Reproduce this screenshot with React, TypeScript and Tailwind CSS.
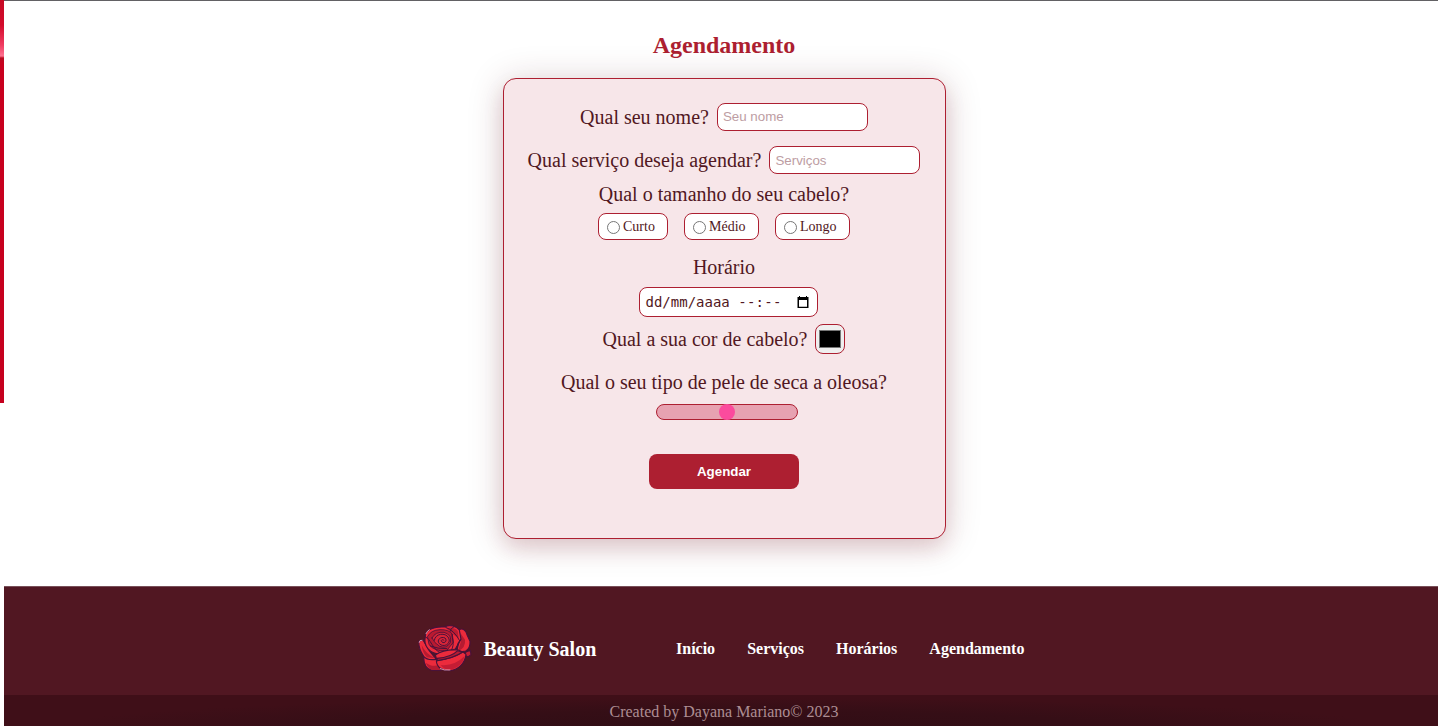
import React from "react";

function Rose() {
  return (
    <svg viewBox="0 0 210 195" className="h-[65px] w-[70px] shrink-0" fill="#ec2b3c" stroke="#48123a" strokeWidth="3.4" strokeLinejoin="round" strokeLinecap="round">
      <path d="M168 111 L181 106 L183 119 L174 126 L164 120Z" fill="#c91e35" />
      <path d="M41 124 C41 145 48 163 66 166 L94 166 L82 132Z" />
      <path d="M48 143 Q62 156 86 151 L92 165 L67 165 Q52 160 48 143Z" fill="#b61b31" stroke="none" />
      <path d="M79 137 L157 110 L168 118 C166 143 145 165 121 167 C96 169 80 156 79 137Z" />
      <path d="M92 150 Q133 154 164 123 Q158 153 125 164 Q103 166 92 150Z" fill="#c51d34" stroke="none" />
      <path d="M26 79 L39 75 L57 106 L79 133 Q51 137 41 124 C29 107 26 94 26 79Z" />
      <path d="M35 91 Q47 117 76 130 L51 127 Q38 116 35 91Z" fill="#b61b31" stroke="none" />
      <path d="M148 44 C157 38 168 46 171 59 L180 79 C181 94 177 103 167 108 L139 113 L148 76Z" />
      <path d="M151 54 L165 74 Q168 98 144 109 L153 79Z" fill="#b61b31" stroke="none" />
      <path d="M46 65 C44 50 64 33 104 36 C119 27 140 34 148 45 L153 73 L136 102 L88 116 C61 116 39 94 46 65Z" />
      <path d="M108 39 Q131 33 143 48 L146 70 L132 60Z" fill="#bd1b31" stroke="none" />
      <path d="M53 64 Q63 45 90 44 Q117 43 127 58 L130 82 L109 108 Q73 109 58 90Z" fill="#b91a31" strokeWidth="2.5" />
      <path d="M66 69 Q76 49 102 52 Q127 59 121 83 Q109 102 89 94 Q73 85 66 69Z" fill="#d72538" strokeWidth="2.5" />
      <path fill="none" strokeWidth="3" d="M73 76 C75 55 107 51 116 69 C125 87 100 99 88 86 C78 75 93 63 105 69 C113 77 104 87 96 81 C90 76 98 71 102 76 M126 58 C125 72 136 83 124 106 M48 67 C59 67 70 107 91 113 M107 37 Q132 45 149 77 M132 35 Q120 40 121 48 M152 74 Q139 83 142 105 M61 93 Q84 102 110 101" />
      <path d="M76 120 Q101 102 145 105 L158 111 Q130 130 81 137Z" />
      <path d="M81 130 Q124 127 143 107 L157 112 Q130 130 82 137Z" fill="#b61b31" />
      <path fill="none" stroke="#e5b6c9" strokeWidth="2.4" d="M48 56 Q52 47 58 44 M28 82 L30 77 L36 76 M91 161 Q101 167 120 165" />
    </svg>
  );
}

function TextField({ placeholder, className }: { placeholder: string; className?: string }) {
  return <input placeholder={placeholder} className={`w-[151px] rounded-lg border border-[#ad1f31] bg-white px-[5px] font-['Liberation_Sans',sans-serif] text-[13.333px] text-[#511722] outline-none placeholder:text-[#bd9da3] ${className ?? ""}`} />;
}

function Choice({ label, width }: { label: string; width: string }) {
  return (
    <label className={`flex h-[27px] items-center rounded-lg border border-[#ad1f31] bg-white pl-2 text-[14px] ${width}`}>
      <input type="radio" name="size" className="relative top-px mr-[3px] size-[13px] shrink-0 appearance-none rounded-full border border-[#767676] bg-white checked:border-4" />
      <span className="pt-px">{label}</span>
    </label>
  );
}

export default function App() {
  return (
    <div className="flex h-[726px] w-full overflow-hidden bg-white font-['Liberation_Serif',serif] text-[#511722]">
      <div className="h-[403px] w-1 shrink-0 bg-[linear-gradient(to_bottom,#c60a24_0px,#d30b2b_25px,#ef3c61_45px,#ff7290_56px,#b90a20_58px,#c8001e_64px,#c5001e_403px)]" />
      <div className="flex w-[1440px] shrink-0 flex-col items-center border-t border-[#626164]">
        <h1 className="mt-[31px] h-[27px] text-[24px] leading-[27px] font-bold text-[#ad1f31]">Agendamento</h1>
        <form className="mt-[19px] flex h-[461px] w-[443px] shrink-0 flex-col items-center rounded-[13px] border border-[#ad1f31] bg-[#f7e6e9] pt-6 text-[20px] leading-6 shadow-[0_10px_20px_rgba(150,20,40,0.13),0_3px_36px_rgba(81,23,34,0.2)]" onSubmit={(event) => event.preventDefault()}>
          <label className="flex h-7 items-center gap-2 whitespace-nowrap">Qual seu nome? <TextField placeholder="Seu nome" className="h-7 pb-[2px]" /></label>
          <label className="mt-[15px] flex h-7 items-center gap-2 whitespace-nowrap">Qual serviço deseja agendar? <TextField placeholder="Serviços" className="h-7" /></label>
          <div className="mt-2 h-6">Qual o tamanho do seu cabelo?</div>
          <div className="mt-[7px] flex gap-4">
            <Choice label="Curto" width="w-[70px]" />
            <Choice label="Médio" width="w-[75px]" />
            <Choice label="Longo" width="w-[75px]" />
          </div>
          <div className="mt-[15px] h-6">Horário</div>
          <div className="mt-2 ml-2 flex h-[30px] w-[179px] items-center justify-between rounded-lg border border-[#ad1f31] bg-white pr-2 pl-[6px] font-['DejaVu_Sans_Mono',monospace] text-[14px]">
            <span className="whitespace-nowrap">dd/mm/aaaa <span className="tracking-[0.25px]">--:--</span></span>
            <svg className="h-[13px] w-3" viewBox="0 0 12 13" fill="black"><path fillRule="evenodd" d="M2 0h1v1h6V0h1v1h1.5v11H.5V1H2V0ZM2 4v6.7h8V4H2Z" /></svg>
          </div>
          <div className="mt-[7px] flex h-[30px] items-center gap-2">
            <span>Qual a sua cor de cabelo?</span>
            <button type="button" aria-label="Preto" className="flex size-[30px] items-center justify-center rounded-lg border border-[#ad1f31] bg-[#efefef]"><span className="h-[18px] w-[22px] border border-[#777] bg-black" /></button>
          </div>
          <div className="mt-4 h-6">Qual o seu tipo de pele de seca a oleosa?</div>
          <div className="mt-[10px] ml-[6px] flex h-4 w-[142px] shrink-0 items-center justify-center rounded-full border border-[#ad1f31] bg-[#e7a2b1]"><span className="size-4 shrink-0 rounded-full bg-[#fb4b9d]" /></div>
          <button className="mt-[34px] h-[35px] w-[150px] shrink-0 rounded-lg bg-[#ad1f31] pt-px font-['Liberation_Sans',sans-serif] text-[13.333px] font-bold text-white">Agendar</button>
        </form>
        <footer className="mt-[47px] flex w-full flex-1 flex-col bg-[#511722] text-white shadow-[inset_0_1px_0_#785059]">
          <div className="flex h-[109px] shrink-0 items-center pt-[14px] pl-[406px]">
            <Rose />
            <span className="ml-[3.5px] w-[192.5px] pt-[2px] text-[20px] font-bold">Beauty Salon</span>
            <nav className="flex gap-8 pt-[2px] text-[16px] font-bold"><a>Início</a><a>Serviços</a><a>Horários</a><a>Agendamento</a></nav>
          </div>
          <div className="flex flex-1 items-center justify-center bg-[radial-gradient(ellipse_at_50%_100%,#300d15_0%,#350e16_35%,#3f0f18_65%)] pt-[3px] text-[16px] text-[#ad8d93]">Created by Dayana Mariano© 2023</div>
        </footer>
      </div>
    </div>
  );
}
